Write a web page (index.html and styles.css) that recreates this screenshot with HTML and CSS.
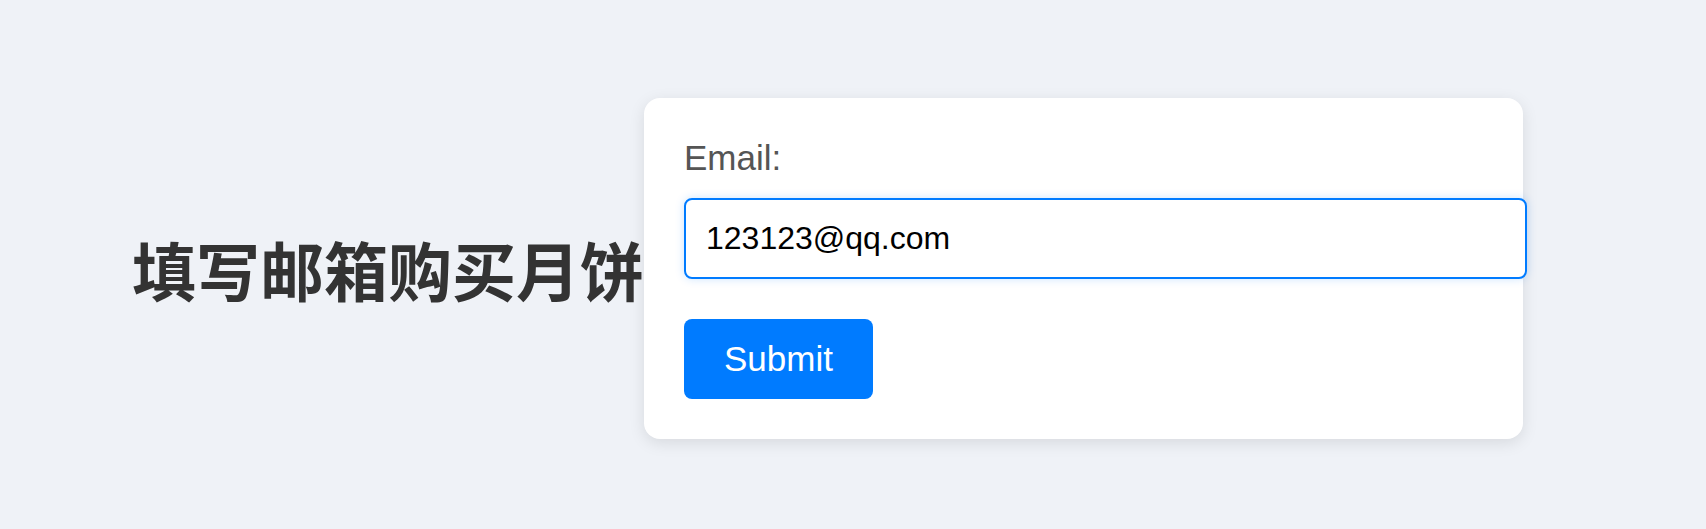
FILE: index.html
```html
<!DOCTYPE html>
<html lang="zh-CN">
<head>
<meta charset="utf-8">
<title>填写邮箱购买月饼</title>
<link rel="stylesheet" href="styles.css">
</head>
<body>
<main class="page">
  <h1 class="title">填写邮箱购买月饼</h1>
  <form class="card">
    <label class="label" for="email">Email:</label>
    <input class="input is-focused" id="email" type="email" value="123123@qq.com">
    <button class="button" type="button">Submit</button>
  </form>
</main>
</body>
</html>
```

FILE: styles.css
```css
html, body {
  margin: 0;
  padding: 0;
}

body {
  background: #eff2f7;
  font-family: "Liberation Sans", Arial, "Noto Sans CJK SC", sans-serif;
}

.page {
  height: 100vh;
  display: flex;
  align-items: center;
  padding-left: 132px;
  padding-top: 7px;
  box-sizing: border-box;
}

.title {
  margin: 0;
  font-family: "Noto Sans CJK SC", sans-serif;
  font-size: 64px;
  font-weight: 700;
  color: #333333;
  white-space: nowrap;
}

.card {
  width: 879px;
  box-sizing: border-box;
  padding: 40px;
  background: #ffffff;
  border-radius: 16px;
  box-shadow: 0 4px 16px rgba(0, 0, 0, 0.1);
}

.label {
  display: block;
  font-size: 35px;
  color: #555555;
  margin-bottom: 20px;
}

.input {
  display: block;
  width: 100%;
  padding: 20px;
  margin: 0 0 40px;
  font-family: "Liberation Sans", Arial, sans-serif;
  font-size: 32px;
  color: #000000;
  border: 2px solid #cccccc;
  border-radius: 8px;
  background: #ffffff;
  outline: none;
}

.input.is-focused,
.input:focus {
  border-color: #007bff;
  box-shadow: 0 0 10px rgba(0, 123, 255, 0.2);
}

.button {
  display: block;
  padding: 20px 40px;
  font-family: "Liberation Sans", Arial, sans-serif;
  font-size: 35px;
  color: #ffffff;
  background: #007bff;
  border: none;
  border-radius: 8px;
  cursor: pointer;
}
```
